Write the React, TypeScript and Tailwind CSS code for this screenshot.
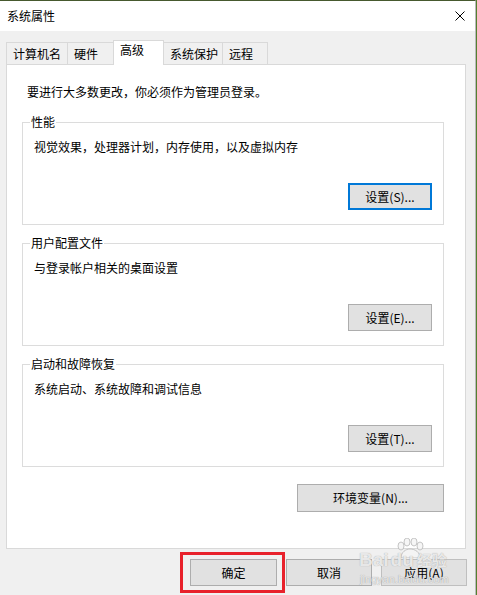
import React from "react";

const tabs = [
  { label: "计算机名", w: "w-[61px]" },
  { label: "硬件", w: "w-[46px]" },
  { label: "高级", w: "w-[51px]", active: true },
  { label: "系统保护", w: "w-[58px]" },
  { label: "远程", w: "w-[46px]", last: true },
];

function Btn({ children, className = "" }: { children: React.ReactNode; className?: string }) {
  return (
    <button className={`h-[27px] bg-[#e1e1e1] text-[12px] leading-[16px] text-black flex items-center justify-center ${className}`}>
      {children}
    </button>
  );
}

function Group({ title, text, button, focused }: { title: string; text: string; button: string; focused?: boolean }) {
  return (
    <div className="relative w-[422px] h-[103px] border border-[#dcdcdc] flex flex-col">
      <span className="absolute -top-[9px] left-[7px] bg-white px-px text-[12px] leading-[16px] text-black">{title}</span>
      <div className="pt-[16px] pl-[11px] text-[12px] leading-[16px] text-black">{text}</div>
      <div className="mt-auto flex justify-end pr-[11px] pb-[14px]">
        <Btn className={`w-[84px] ${focused ? "border-2 border-[#0078d7]" : "border border-[#adadad]"}`}>{button}</Btn>
      </div>
    </div>
  );
}

export default function App() {
  return (
    <div className="relative w-[477px] h-[595px] overflow-hidden bg-[#55802f] flex font-['Noto_Sans_CJK_SC',sans-serif]">
      <div className="w-[476px] h-full border-t border-[#46592e] border-r border-r-[#b9b9b9] bg-[#f0f0f0] flex flex-col">
        {/* title bar */}
        <div className="h-[30px] bg-white flex items-center justify-between pl-[7px] pr-[10px] shrink-0">
          <span className="text-[12px] leading-[16px] text-black">系统属性</span>
          <svg width="10" height="10" viewBox="0 0 10 10">
            <path d="M0.5 0.5 L9.5 9.5 M9.5 0.5 L0.5 9.5" stroke="#000" strokeWidth="1" />
          </svg>
        </div>

        <div className="px-[6px] pt-[9px] flex flex-col">
          {/* tabs */}
          <div className="flex items-end h-[24px]">
            {tabs.map((t) =>
              t.active ? (
                <div key={t.label} className={`${t.w} h-[25px] -mb-px relative z-10 bg-white border-t border-l border-r border-[#d9d9d9] pl-[6px] pt-[1px] text-[12px] leading-[16px] text-black`}>
                  {t.label}
                </div>
              ) : (
                <div key={t.label} className={`${t.w} h-[22px] bg-[#f0f0f0] border-t border-[#d9d9d9] ${t.label === "系统保护" ? "" : "border-l"} ${t.last ? "border-r" : ""} pl-[6px] pt-[3px] text-[12px] leading-[16px] text-black`}>
                  {t.label}
                </div>
              )
            )}
          </div>

          {/* panel */}
          <div className="w-[460px] h-[485px] border border-[#d9d9d9] bg-white flex flex-col">
            <div className="pt-[19px] pl-[20px] text-[12px] leading-[16px] text-black">要进行大多数更改，你必须作为管理员登录。</div>
            <div className="ml-[15px] mt-[22px] flex flex-col gap-[18px]">
              <Group title="性能" text="视觉效果，处理器计划，内存使用，以及虚拟内存" button="设置(S)..." focused />
              <Group title="用户配置文件" text="与登录帐户相关的桌面设置" button="设置(E)..." />
              <Group title="启动和故障恢复" text="系统启动、系统故障和调试信息" button="设置(T)..." />
            </div>
            <div className="ml-[15px] w-[422px] mt-[17px] flex justify-end">
              <Btn className="w-[147px] h-[28px] border border-[#adadad]">环境变量(N)...</Btn>
            </div>
          </div>

          {/* bottom buttons */}
          <div className="mt-[10px] flex justify-end gap-[9px] pr-[2px]">
            <div className="relative">
              <Btn className="w-[87px] border border-[#adadad]">确定</Btn>
              <div className="absolute -left-[10px] -top-[7px] w-[105px] h-[41px] border-[3px] border-[#e8212b]" />
            </div>
            <Btn className="w-[86px] border border-[#adadad]">取消</Btn>
            <Btn className="w-[86px] border border-[#bfbfbf] bg-[#cccccc] text-[#8a8a8a]">应用(A)</Btn>
          </div>
        </div>
      </div>

      {/* watermark */}
      <div className="absolute left-[359px] top-[538px] w-[92px] h-[50px] pointer-events-none">
        <svg width="34" height="20" viewBox="0 0 34 20" className="absolute left-[34px] top-0">
          <g fill="#f4f4f4" fillOpacity="0.85" stroke="#b8b8b8" strokeWidth="0.8">
            <ellipse cx="8" cy="8" rx="3" ry="4" />
            <ellipse cx="14" cy="4" rx="3" ry="4" />
            <ellipse cx="21" cy="4" rx="3" ry="4" />
            <ellipse cx="27" cy="8" rx="3" ry="4" />
            <path d="M8 20 C8 14 13 11 17 11 C22 11 27 14 27 20 Z" />
          </g>
        </svg>
        <div className="absolute left-0 top-[13px] flex items-end text-[19px] leading-[18px] font-bold font-['Liberation_Sans',sans-serif] text-[#f2f2f2]/90 [text-shadow:0_0_1px_#9a9a9a]">
          <span>Bai</span>
          <span className="ml-[2px]">du</span>
          <span className="ml-[3px] text-[15px] font-['Noto_Sans_CJK_SC',sans-serif]">经验</span>
        </div>
        <div className="absolute left-[1px] top-[35px] text-[11px] leading-[12px] font-['Liberation_Sans',sans-serif] text-[#f2f2f2]/90 [text-shadow:0_0_1px_#8a8a8a]">
          jingyan.baidu.com
        </div>
      </div>
    </div>
  );
}
